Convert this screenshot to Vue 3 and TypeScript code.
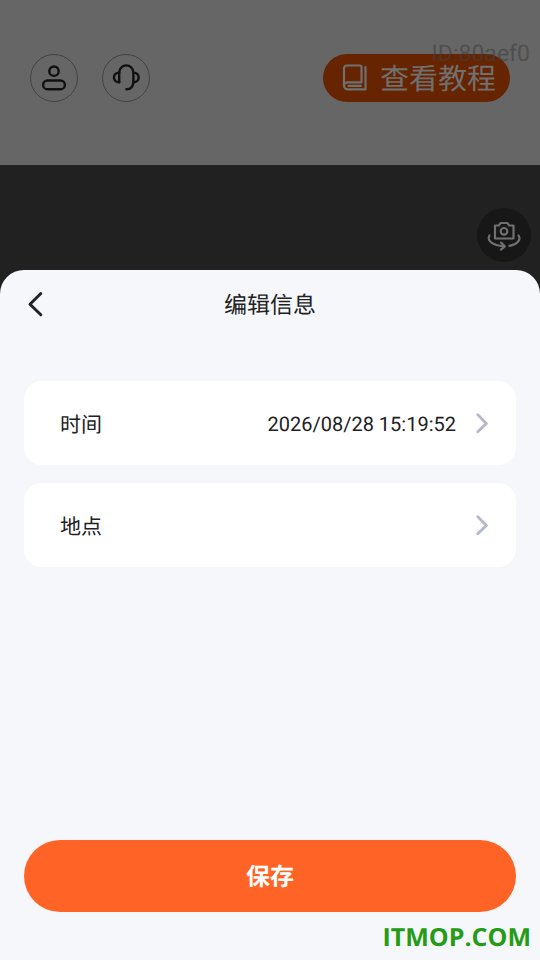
<script setup lang="ts">
import { ref } from 'vue'

interface Field {
  id: string
  label: string
  value: string
}

const deviceId = ref('ID:80aef0')
const fields = ref<Field[]>([
  { id: 'time', label: '时间', value: '2026/08/28 15:19:52' },
  { id: 'place', label: '地点', value: '' },
])
</script>

<template>
  <div class="page">
    <header class="topbar">
      <button class="round" type="button" aria-label="个人中心">
        <svg width="46" height="46" viewBox="1 1 46 46" fill="none" stroke="#111" stroke-width="2.4">
          <circle cx="24" cy="17.2" r="4.7" />
          <rect x="13.1" y="26.5" width="21.8" height="8.8" rx="4.4" />
        </svg>
      </button>
      <button class="round" type="button" aria-label="客服">
        <svg width="46" height="46" viewBox="1 1 46 46" fill="none" stroke="#111" stroke-width="2.4" stroke-linecap="round" stroke-linejoin="round">
          <path d="M17.200 28V18.500a7.100 7.100 0 0 1 14.200 0V27.500c0 4.800-2.500 7.800-7 7.800" />
          <path d="M17.200 18.600c-7 .2-7 9.400 0 9.600M31.400 18.600c7 .2 7 9.400 0 9.600" />
        </svg>
      </button>
      <button class="tutorial" type="button">
        <svg width="26" height="28" viewBox="0 0 26 28" fill="none" stroke="#707070" stroke-width="2.2" stroke-linecap="round" stroke-linejoin="round">
          <path d="M2 21.500V4.500A3 3 0 0 1 5 1.500H18a1.500 1.500 0 0 1 1.500 1.500V18.300H5.500a3.500 3.500 0 0 0 0 7H23.500V3" />
          <path d="M6.500 21.800H19" />
        </svg>
        <span>查看教程</span>
      </button>
      <span class="device">{{ deviceId }}</span>
    </header>

    <section class="camera">
      <button class="flip" type="button" aria-label="切换摄像头">
        <svg width="54" height="54" viewBox="0 0 54 54" fill="none" stroke="#707070" stroke-width="2.200" stroke-linejoin="round">
          <path d="M18 17.500h4l1.500-2.500h7l1.500 2.500h4.500V30.500H18z" />
          <circle cx="27" cy="23.300" r="3.300" />
          <path d="M12.500 27.500c-3 5 2.500 10 14.500 10.800" stroke-linecap="round" />
          <path d="M24 34.600l3.800 3.700-3.800 3.300" stroke-linecap="round" />
          <path d="M41.500 27.500c3 4.500-1.500 9-9 10.300" stroke-linecap="round" />
        </svg>
      </button>
    </section>

    <main class="sheet">
      <div class="heading">
        <button class="back" type="button" aria-label="返回">
          <svg width="20" height="28" viewBox="0 0 20 28" fill="none" stroke="#222428" stroke-width="3" stroke-linecap="round" stroke-linejoin="round">
            <path d="M16.800 3.500L6 14.200l10.800 10.600" />
          </svg>
        </button>
        <h1>编辑信息</h1>
      </div>
      <div class="fields">
        <button v-for="field in fields" :key="field.id" class="field" type="button">
          <span class="label">{{ field.label }}</span>
          <span class="value">{{ field.value }}</span>
          <svg width="14" height="22" viewBox="0 0 14 22" fill="none" stroke="#b3b8cc" stroke-width="2.800" stroke-linecap="round" stroke-linejoin="round">
            <path d="M2.800 2.800l8.600 8.600-8.600 8.400" />
          </svg>
        </button>
      </div>
      <button class="save" type="button">保存</button>
      <span class="brand">ITMOP.COM</span>
    </main>
  </div>
</template>

<style>
body {
  margin: 0;
}
</style>

<style scoped>
.page {
  display: flex;
  flex-direction: column;
  min-height: 100vh;
  background: #212121;
  color: #222;
  font-family: Roboto, "Noto Sans CJK SC", sans-serif;
  text-rendering: geometricPrecision;
}

button {
  margin: 0;
  padding: 0;
  border: 0;
  background: none;
  color: inherit;
  font: inherit;
  text-rendering: inherit;
  cursor: pointer;
}

svg {
  display: block;
  flex: none;
}

.topbar {
  position: relative;
  display: flex;
  align-items: flex-start;
  gap: 24px;
  box-sizing: border-box;
  height: 165px;
  padding: 54px 30px 0;
  background: #666;
}

.round {
  display: grid;
  place-items: center;
  box-sizing: border-box;
  width: 48px;
  height: 48px;
  border: 1px solid #444;
  border-radius: 50%;
}

.tutorial {
  display: flex;
  align-items: center;
  gap: 12px;
  height: 48px;
  margin-left: auto;
  padding: 0 14px 0 19px;
  border-radius: 24px;
  background: #662400;
  color: #707070;
  font-size: 29px;
  line-height: 48px;
}

.tutorial span {
  padding-top: 4px;
}

.device {
  position: absolute;
  top: 40px;
  right: 10px;
  color: rgba(64, 64, 64, 0.6);
  font-size: 23px;
  line-height: 28px;
  pointer-events: none;
}

.camera {
  display: flex;
  justify-content: flex-end;
  align-items: flex-start;
  padding: 43px 9px 32px;
}

.flip {
  width: 54px;
  height: 54px;
  border-radius: 50%;
  background: #171717;
}

.sheet {
  position: relative;
  display: flex;
  flex: 1;
  flex-direction: column;
  margin-top: -24px;
  padding: 0 24px 48px;
  border-radius: 24px 24px 0 0;
  background: #f5f7fb;
}

.heading {
  display: grid;
  grid-template-columns: 24px 1fr 24px;
  align-items: center;
  height: 68px;
}

h1 {
  margin: 0;
  padding-top: 4px;
  font-size: 23px;
  font-weight: 400;
  line-height: 32px;
  text-align: center;
}

.fields {
  display: flex;
  flex-direction: column;
  gap: 18px;
  padding: 43px 0 48px;
}

.field {
  display: flex;
  align-items: center;
  height: 84px;
  padding: 0 27px 0 36px;
  border-radius: 18px;
  background: #fff;
}

.label {
  padding-top: 6px;
  font-size: 21px;
  line-height: 32px;
}

.value {
  flex: 1;
  padding-top: 2px;
  padding-right: 19px;
  font-size: 20px;
  line-height: 32px;
  text-align: right;
}

.save {
  height: 72px;
  margin-top: auto;
  padding-bottom: 4px;
  border-radius: 36px;
  background: #ff6426;
  color: #fff;
  font-size: 24px;
  font-weight: 700;
}

.brand {
  position: absolute;
  right: 9px;
  bottom: 5px;
  color: #259b16;
  font-family: "Open Sans", "Noto Sans", sans-serif;
  font-size: 25px;
  font-weight: 700;
  line-height: 36px;
}
</style>
